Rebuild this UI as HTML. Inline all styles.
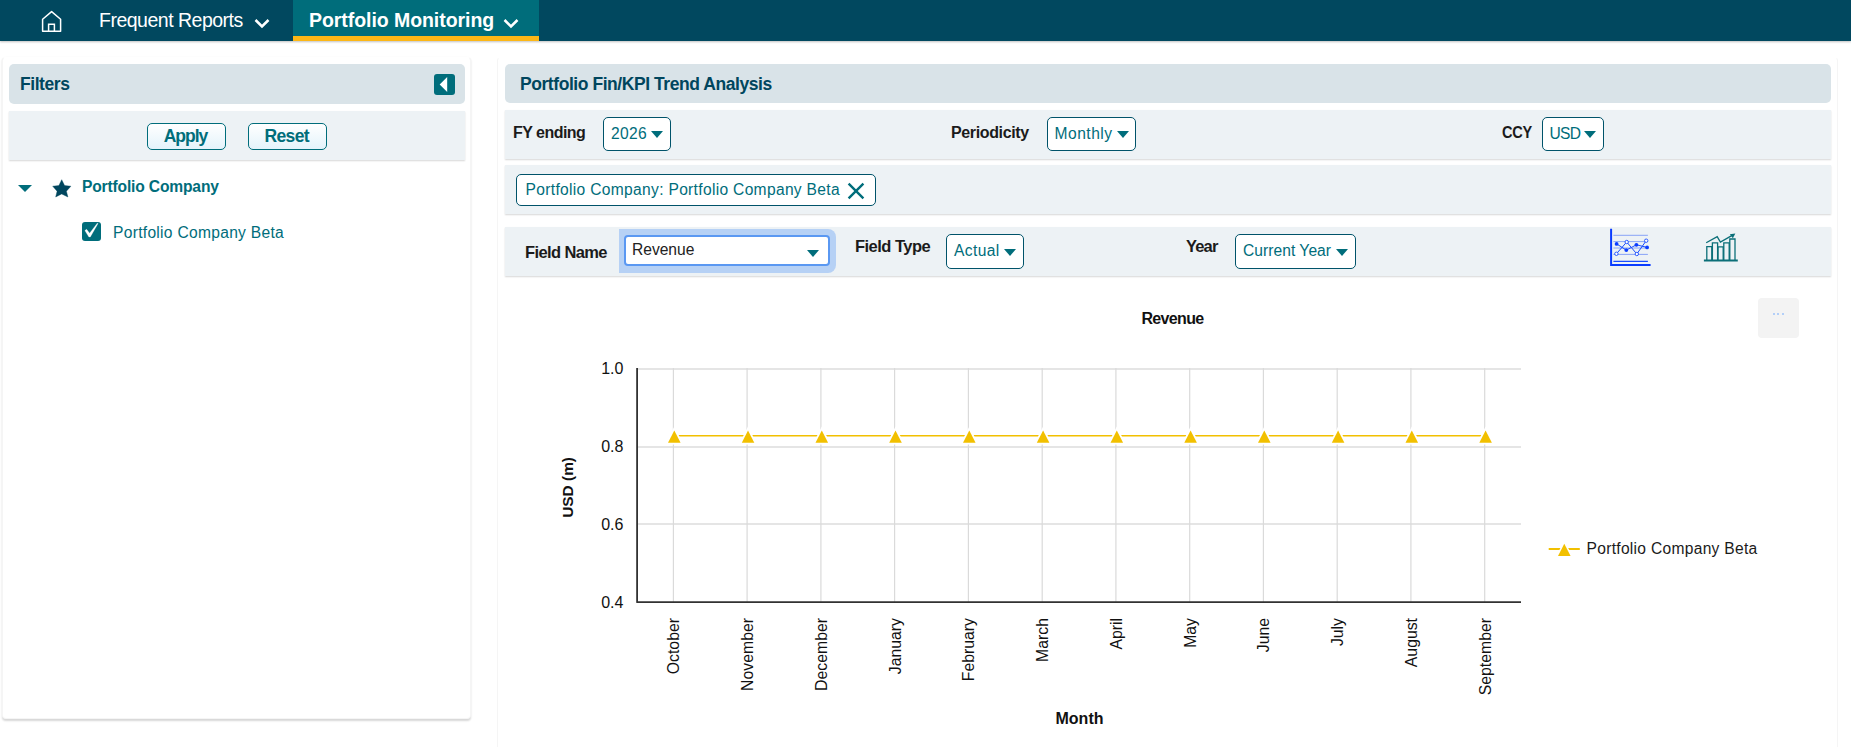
<!DOCTYPE html>
<html><head><meta charset="utf-8">
<style>
*{box-sizing:border-box}
html,body{margin:0;padding:0;width:1851px;height:747px;overflow:hidden;background:#fff;font-family:"Liberation Sans",sans-serif}
.a{position:absolute}
.t{position:absolute;line-height:0;white-space:nowrap}
.b{font-weight:bold}
#nav{left:0;top:0;width:1851px;height:41px;background:#01485f;box-shadow:0 1px 2px rgba(0,0,0,.25)}
#tab{left:293px;top:0;width:246px;height:41px;background:#006d7b;border-bottom:5px solid #fcb716}
.card{background:#fff;border:1px solid #f5f5f5;border-top-color:#fff;border-radius:4px}
.hdr{background:#d9e3e8;border-radius:5px}
.row{background:#edf2f5;box-shadow:0 1px 1.5px rgba(0,0,0,.16)}
.btn{border:1.5px solid #006d7b;border-radius:5px;background:linear-gradient(#fff,#e4f3fb)}
.dd{background:#fff;border:1.5px solid #00536a;border-radius:5px}
.car{position:absolute;width:0;height:0;border-left:6px solid transparent;border-right:6px solid transparent;border-top:7px solid #006d7b}
.lbl{color:#1b1b1b}
.tv{color:#006d7b}
</style></head><body>

<!-- NAV -->
<div id="nav" class="a"></div>
<div id="tab" class="a"></div>
<svg class="a" style="left:38px;top:8px" width="28" height="28" viewBox="38 8 28 28">
  <path d="M42.6 31.3V19.3L51.6 11.6L60.6 19.3V31.3Z" fill="none" stroke="#fff" stroke-width="1.5" stroke-linejoin="round"/>
  <path d="M48.6 31.3V24.2H54.4V31.3" fill="none" stroke="#fff" stroke-width="1.5"/>
</svg>
<div class="t" style="left:99px;top:20px;font-size:19.5px;color:#fff;letter-spacing:-0.5px">Frequent Reports</div>
<svg class="a" style="left:253px;top:17px" width="18" height="13"><polyline points="2.5,3 9,9.5 15.5,3" fill="none" stroke="#fff" stroke-width="2.5"/></svg>
<div class="t b" style="left:309px;top:20px;font-size:19.5px;color:#fff;letter-spacing:-0.06px">Portfolio Monitoring</div>
<svg class="a" style="left:502px;top:17px" width="18" height="13"><polyline points="2.5,3 9,9.5 15.5,3" fill="none" stroke="#fff" stroke-width="2.5"/></svg>

<!-- LEFT CARD -->
<div class="a card" style="left:2px;top:57px;width:469px;height:662px;box-shadow:0 1.5px 2px rgba(0,0,0,.16)"></div>
<div class="a hdr" style="left:9px;top:64px;width:456px;height:40px"></div>
<div class="t b" style="left:20px;top:84px;font-size:17.5px;color:#00465e;letter-spacing:-0.43px">Filters</div>
<div class="a" style="left:434px;top:74px;width:21px;height:21px;background:#006d7b;border-radius:3px"></div>
<svg class="a" style="left:434px;top:74px" width="21" height="21"><polygon points="5.7,10.5 13.2,3 13.2,18" fill="#fff"/></svg>
<div class="a row" style="left:9px;top:111px;width:456px;height:49px"></div>
<div class="a btn" style="left:147px;top:123px;width:79px;height:27px"></div>
<div class="a btn" style="left:248px;top:123px;width:79px;height:27px"></div>
<div class="t b tv" style="left:163.7px;top:136px;font-size:17.5px;letter-spacing:-1px">Apply</div>
<div class="t b tv" style="left:264.5px;top:136px;font-size:17.5px;letter-spacing:-0.65px">Reset</div>

<div class="car" style="left:18.2px;top:185px;border-left-width:7px;border-right-width:7px;border-top-width:7px"></div>
<svg class="a" style="left:52px;top:179px" width="20" height="19" viewBox="0 0 20 19"><polygon points="9.7,0.7 12.6,6.6 18.9,7.2 14.4,12.2 15.9,18 9.7,14.9 3.7,18 5.1,12.2 0.7,7.2 6.9,6.6" fill="#00465e" stroke="#00465e" stroke-width="0.4" stroke-linejoin="round"/></svg>
<div class="t b tv" style="left:82px;top:186.5px;font-size:15.6px;letter-spacing:-0.16px">Portfolio Company</div>
<div class="a" style="left:82px;top:222px;width:19px;height:19px;background:#006d7b;border-radius:3px"></div>
<svg class="a" style="left:82px;top:222px" width="19" height="19"><polygon points="2.9,8.6 4.6,7.3 7.6,11.3 15.5,0.9 15.9,1.7 8.3,14.9 6.9,14.9" fill="#fff" stroke="#fff" stroke-width="0.3" stroke-linejoin="round"/></svg>
<div class="t tv" style="left:113px;top:233px;font-size:15.6px;letter-spacing:0.29px">Portfolio Company Beta</div>

<!-- RIGHT CARD -->
<div class="a card" style="left:497px;top:57px;width:1341px;height:720px"></div>
<div class="a hdr" style="left:505px;top:64px;width:1326px;height:39px"></div>
<div class="t b" style="left:520px;top:83.5px;font-size:17.5px;color:#00465e;letter-spacing:-0.44px">Portfolio Fin/KPI Trend Analysis</div>

<div class="a row" style="left:505px;top:110px;width:1326px;height:49px"></div>
<div class="t b lbl" style="left:513px;top:132.5px;font-size:16px;letter-spacing:-0.52px">FY ending</div>
<div class="a dd" style="left:603px;top:117px;width:68px;height:34px"></div>
<div class="t tv" style="left:611px;top:133.5px;font-size:15.6px;letter-spacing:0.29px">2026</div>
<div class="car" style="left:651px;top:130.5px"></div>
<div class="t b lbl" style="left:951px;top:132.5px;font-size:16px;letter-spacing:-0.37px">Periodicity</div>
<div class="a dd" style="left:1047px;top:117px;width:89px;height:34px"></div>
<div class="t tv" style="left:1054.6px;top:133.5px;font-size:15.6px;letter-spacing:0.48px">Monthly</div>
<div class="car" style="left:1117px;top:130.5px"></div>
<div class="t b lbl" style="left:1502.2px;top:131.8px;font-size:16.2px;letter-spacing:-0.3px;transform:scaleX(0.9);transform-origin:0 0">CCY</div>
<div class="a dd" style="left:1542px;top:117px;width:62px;height:34px"></div>
<div class="t tv" style="left:1549.5px;top:133.5px;font-size:15.6px;letter-spacing:-0.7px">USD</div>
<div class="car" style="left:1584px;top:130.5px"></div>

<div class="a row" style="left:505px;top:165px;width:1326px;height:49px"></div>
<div class="a dd" style="left:516px;top:174px;width:360px;height:32px"></div>
<div class="t tv" style="left:525.6px;top:189.5px;font-size:15.6px;letter-spacing:0.31px">Portfolio Company: Portfolio Company Beta</div>
<svg class="a" style="left:846px;top:181px" width="20" height="20"><path d="M2.6 2.6L17.4 17.4M17.4 2.6L2.6 17.4" stroke="#006d7b" stroke-width="2.4"/></svg>

<div class="a row" style="left:505px;top:227px;width:1326px;height:49px"></div>
<div class="t b lbl" style="left:525px;top:252px;font-size:16.5px;letter-spacing:-0.61px">Field Name</div>
<div class="a" style="left:618.5px;top:228.5px;width:217px;height:44px;background:#b6d1f5;border-radius:0 8px 8px 0"></div>
<div class="a" style="left:624px;top:235px;width:206px;height:31px;background:#fff;border:2px solid #5a98f2;border-radius:4px"></div>
<div class="t" style="left:632px;top:249.5px;font-size:15.6px;color:#222;letter-spacing:-0.02px">Revenue</div>
<div class="car" style="left:807px;top:249.5px"></div>
<div class="t b lbl" style="left:855px;top:245.6px;font-size:16.5px;letter-spacing:-0.53px">Field Type</div>
<div class="a dd" style="left:946px;top:234px;width:78px;height:35px"></div>
<div class="t tv" style="left:954px;top:250.5px;font-size:15.6px;letter-spacing:0.38px">Actual</div>
<div class="car" style="left:1004px;top:248.5px"></div>
<div class="t b lbl" style="left:1186px;top:245.6px;font-size:16.5px;letter-spacing:-0.85px">Year</div>
<div class="a dd" style="left:1235px;top:234px;width:121px;height:35px"></div>
<div class="t tv" style="left:1243px;top:250.5px;font-size:15.6px;letter-spacing:0.04px">Current Year</div>
<div class="car" style="left:1336px;top:248.5px"></div>

<!-- chart type icons -->
<svg class="a" style="left:1600px;top:220px" width="60" height="55" viewBox="1600 220 60 55">
  <g stroke="#6f8ff8" stroke-width="0.8">
    <line x1="1613.4" y1="235.3" x2="1647.9" y2="235.3"/>
    <line x1="1613.4" y1="241.6" x2="1647.9" y2="241.6"/>
    <line x1="1613.4" y1="248" x2="1647.9" y2="248"/>
    <line x1="1613.4" y1="254.4" x2="1647.9" y2="254.4"/>
  </g>
  <line x1="1613.4" y1="261.4" x2="1647.9" y2="261.4" stroke="#1a4dff" stroke-width="1.2"/>
  <path d="M1611.1 228.8V265H1650.6" fill="none" stroke="#0a3cff" stroke-width="2"/>
  <polyline points="1616.6,243.9 1626.3,250.1 1636.4,244.8 1647.1,247.4" fill="none" stroke="#1a4dff" stroke-width="1"/>
  <polyline points="1616.4,253.8 1626.7,242 1636.8,254 1646.2,240.7" fill="none" stroke="#1a4dff" stroke-width="1"/>
  <g fill="#0a3cff"><circle cx="1616.6" cy="243.9" r="1.9"/><circle cx="1626.3" cy="250.1" r="1.9"/><circle cx="1636.4" cy="244.8" r="1.9"/><circle cx="1647.1" cy="247.4" r="1.9"/></g>
  <g fill="#fff" stroke="#1a4dff" stroke-width="0.9"><circle cx="1616.4" cy="253.8" r="1.7"/><circle cx="1626.7" cy="242" r="1.7"/><circle cx="1636.8" cy="254" r="1.7"/><circle cx="1646.2" cy="240.7" r="1.7"/></g>
</svg>
<svg class="a" style="left:1700px;top:228px" width="42" height="38" viewBox="1700 228 42 38">
  <g fill="none" stroke="#0b6f78" stroke-width="1.3">
    <path d="M1706.8 260V246.6H1711.8V260"/>
    <path d="M1712.4 260V242.8H1717.6V260"/>
    <path d="M1718 260V246.8H1723.2V260"/>
    <path d="M1723.8 260V242.8H1729.2V260"/>
    <path d="M1729.8 260V239H1735V260"/>
    <polyline points="1706.2,242.8 1717.2,236.6 1720.4,242 1733.5,234.6"/>
  </g>
  <line x1="1703.9" y1="260.5" x2="1737.8" y2="260.5" stroke="#0b6f78" stroke-width="2"/>
  <polygon points="1735.3,233.4 1729.8,234.2 1732.9,238.2" fill="#0b6f78"/>
</svg>

<!-- CHART -->
<div class="a" style="left:1758px;top:298px;width:41px;height:40px;background:#f3f3f3;border-radius:4px"></div>
<div class="a" style="left:1773px;top:313px;width:2px;height:2px;background:#b3cff8"></div><div class="a" style="left:1777.3px;top:313px;width:2px;height:2px;background:#b3cff8"></div><div class="a" style="left:1781.5px;top:313px;width:2px;height:2px;background:#b3cff8"></div>
<svg class="a" style="left:0;top:0" width="1851" height="747">
<line x1="637" y1="368.9" x2="1521" y2="368.9" stroke="#dcdcdc" stroke-width="1.5"/>
<line x1="637" y1="447.1" x2="1521" y2="447.1" stroke="#dcdcdc" stroke-width="1.5"/>
<line x1="637" y1="524.1" x2="1521" y2="524.1" stroke="#dcdcdc" stroke-width="1.5"/>
<line x1="673.4" y1="368.1" x2="673.4" y2="602.2" stroke="#dadada" stroke-width="1.2"/>
<line x1="747.1" y1="368.1" x2="747.1" y2="602.2" stroke="#dadada" stroke-width="1.2"/>
<line x1="820.9" y1="368.1" x2="820.9" y2="602.2" stroke="#dadada" stroke-width="1.2"/>
<line x1="894.6" y1="368.1" x2="894.6" y2="602.2" stroke="#dadada" stroke-width="1.2"/>
<line x1="968.4" y1="368.1" x2="968.4" y2="602.2" stroke="#dadada" stroke-width="1.2"/>
<line x1="1042.2" y1="368.1" x2="1042.2" y2="602.2" stroke="#dadada" stroke-width="1.2"/>
<line x1="1115.9" y1="368.1" x2="1115.9" y2="602.2" stroke="#dadada" stroke-width="1.2"/>
<line x1="1189.7" y1="368.1" x2="1189.7" y2="602.2" stroke="#dadada" stroke-width="1.2"/>
<line x1="1263.4" y1="368.1" x2="1263.4" y2="602.2" stroke="#dadada" stroke-width="1.2"/>
<line x1="1337.2" y1="368.1" x2="1337.2" y2="602.2" stroke="#dadada" stroke-width="1.2"/>
<line x1="1410.9" y1="368.1" x2="1410.9" y2="602.2" stroke="#dadada" stroke-width="1.2"/>
<line x1="1484.7" y1="368.1" x2="1484.7" y2="602.2" stroke="#dadada" stroke-width="1.2"/>
<path d="M637.1 368.1V602.2H1521" fill="none" stroke="#323232" stroke-width="1.8" stroke-linejoin="round"/>
<text x="623.4" y="373.9" text-anchor="end" font-size="16" fill="#111">1.0</text>
<text x="623.4" y="451.9" text-anchor="end" font-size="16" fill="#111">0.8</text>
<text x="623.4" y="529.9" text-anchor="end" font-size="16" fill="#111">0.6</text>
<text x="623.4" y="607.9" text-anchor="end" font-size="16" fill="#111">0.4</text>
<text transform="translate(679.3,618) rotate(-90)" text-anchor="end" font-size="15.8" fill="#111">October</text>
<text transform="translate(753.0,618) rotate(-90)" text-anchor="end" font-size="15.8" fill="#111">November</text>
<text transform="translate(826.8,618) rotate(-90)" text-anchor="end" font-size="15.8" fill="#111">December</text>
<text transform="translate(900.5,618) rotate(-90)" text-anchor="end" font-size="15.8" fill="#111">January</text>
<text transform="translate(974.3,618) rotate(-90)" text-anchor="end" font-size="15.8" fill="#111">February</text>
<text transform="translate(1048.1,618) rotate(-90)" text-anchor="end" font-size="15.8" fill="#111">March</text>
<text transform="translate(1121.8,618) rotate(-90)" text-anchor="end" font-size="15.8" fill="#111">April</text>
<text transform="translate(1195.6,618) rotate(-90)" text-anchor="end" font-size="15.8" fill="#111">May</text>
<text transform="translate(1269.3,618) rotate(-90)" text-anchor="end" font-size="15.8" fill="#111">June</text>
<text transform="translate(1343.1,618) rotate(-90)" text-anchor="end" font-size="15.8" fill="#111">July</text>
<text transform="translate(1416.8,618) rotate(-90)" text-anchor="end" font-size="15.8" fill="#111">August</text>
<text transform="translate(1490.6,618) rotate(-90)" text-anchor="end" font-size="15.8" fill="#111">September</text>
<line x1="673.4" y1="435.8" x2="1484.7" y2="435.8" stroke="#f2c000" stroke-width="1.6"/>
<polygon points="674.3,430.4 680.6,442.8 668.0,442.8" fill="#f2c000" stroke="#fff" stroke-width="3.5" paint-order="stroke" stroke-linejoin="miter"/>
<polygon points="748.0,430.4 754.3,442.8 741.8,442.8" fill="#f2c000" stroke="#fff" stroke-width="3.5" paint-order="stroke" stroke-linejoin="miter"/>
<polygon points="821.8,430.4 828.1,442.8 815.5,442.8" fill="#f2c000" stroke="#fff" stroke-width="3.5" paint-order="stroke" stroke-linejoin="miter"/>
<polygon points="895.5,430.4 901.8,442.8 889.2,442.8" fill="#f2c000" stroke="#fff" stroke-width="3.5" paint-order="stroke" stroke-linejoin="miter"/>
<polygon points="969.3,430.4 975.6,442.8 963.0,442.8" fill="#f2c000" stroke="#fff" stroke-width="3.5" paint-order="stroke" stroke-linejoin="miter"/>
<polygon points="1043.1,430.4 1049.4,442.8 1036.8,442.8" fill="#f2c000" stroke="#fff" stroke-width="3.5" paint-order="stroke" stroke-linejoin="miter"/>
<polygon points="1116.8,430.4 1123.1,442.8 1110.5,442.8" fill="#f2c000" stroke="#fff" stroke-width="3.5" paint-order="stroke" stroke-linejoin="miter"/>
<polygon points="1190.6,430.4 1196.9,442.8 1184.3,442.8" fill="#f2c000" stroke="#fff" stroke-width="3.5" paint-order="stroke" stroke-linejoin="miter"/>
<polygon points="1264.3,430.4 1270.6,442.8 1258.0,442.8" fill="#f2c000" stroke="#fff" stroke-width="3.5" paint-order="stroke" stroke-linejoin="miter"/>
<polygon points="1338.1,430.4 1344.4,442.8 1331.8,442.8" fill="#f2c000" stroke="#fff" stroke-width="3.5" paint-order="stroke" stroke-linejoin="miter"/>
<polygon points="1411.8,430.4 1418.1,442.8 1405.5,442.8" fill="#f2c000" stroke="#fff" stroke-width="3.5" paint-order="stroke" stroke-linejoin="miter"/>
<polygon points="1485.6,430.4 1491.9,442.8 1479.3,442.8" fill="#f2c000" stroke="#fff" stroke-width="3.5" paint-order="stroke" stroke-linejoin="miter"/>
<text x="1172.5" y="323.8" text-anchor="middle" font-size="16" font-weight="bold" fill="#111" letter-spacing="-0.65">Revenue</text>
<text x="1079.5" y="723.8" text-anchor="middle" font-size="16" font-weight="bold" fill="#111">Month</text>
<text transform="translate(573.2,487.4) rotate(-90)" text-anchor="middle" font-size="15.4" font-weight="bold" fill="#111">USD (m)</text>
<line x1="1548.7" y1="549" x2="1579.8" y2="549" stroke="#f2c000" stroke-width="2"/>
<polygon points="1564.3,543.8 1570.6,556 1558,556" fill="#f2c000" stroke="#fff" stroke-width="3" paint-order="stroke"/>
<text x="1586.5" y="553.6" font-size="15.6" fill="#1b1b1b" letter-spacing="0.29">Portfolio Company Beta</text>
</svg>

</body></html>
